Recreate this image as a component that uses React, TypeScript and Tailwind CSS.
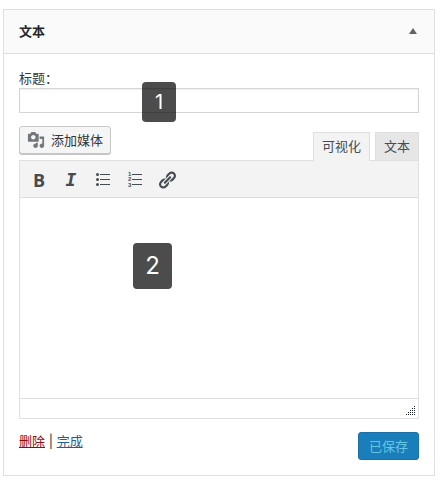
import React, { useState } from 'react';

const MediaIcon: React.FC = () => (
    <svg viewBox="0 0 20 20" className="h-[18px] w-[18px] shrink-0 fill-[#72777c]" aria-hidden="true">
        <path d="M13 11V4c0-.55-.45-1-1-1h-1.67L9 1H5L3.67 3H2c-.55 0-1 .45-1 1v7c0 .55.45 1 1 1h10c.55 0 1-.45 1-1zM7 4.5c1.38 0 2.5 1.12 2.5 2.5S8.38 9.5 7 9.5 4.5 8.38 4.5 7 5.62 4.5 7 4.5zM14 6h5v10.5c0 1.38-1.12 2.5-2.5 2.5S14 17.88 14 16.5s1.12-2.5 2.5-2.5c.17 0 .34.02.5.05V9h-3V6zm-4 8.05V13h2v3.5c0 1.38-1.12 2.5-2.5 2.5S7 17.88 7 16.5 8.12 14 9.5 14c.17 0 .34.02.5.05z" />
    </svg>
);

const BulletListIcon: React.FC = () => (
    <svg viewBox="0 0 20 20" className="h-5 w-5 fill-[#444b52]" aria-hidden="true">
        <circle cx="4.5" cy="4.5" r="1.5" />
        <circle cx="4.5" cy="9.5" r="1.5" />
        <circle cx="4.5" cy="14.5" r="1.5" />
        <path d="M7 4h10v1H7zM7 9h10v1H7zM7 14h10v1H7z" />
    </svg>
);

const NumberListIcon: React.FC = () => (
    <svg viewBox="0 0 20 20" className="h-5 w-5 fill-[#444b52] font-['Liberation_Sans',sans-serif] text-[6px] font-bold" aria-hidden="true">
        <text x="3" y="6">1</text>
        <text x="3" y="11">2</text>
        <text x="3" y="17">3</text>
        <path d="M7 4h10v1H7zM7 9h10v1H7zM7 14h10v1H7z" />
    </svg>
);

const LinkIcon: React.FC = () => (
    <svg viewBox="0 0 20 20" className="h-5 w-5 fill-[#444b52]" aria-hidden="true">
        <path d="M17.74 2.76c1.68 1.69 1.68 4.41 0 6.1l-1.53 1.52c-1.12 1.12-2.7 1.47-4.14 1.09l2.62-2.61.76-.77.76-.76c.84-.84.84-2.2 0-3.04-.84-.85-2.2-.85-3.04 0l-.77.76-3.38 3.38c-.37-1.44-.02-3.02 1.1-4.14l1.52-1.53c1.69-1.68 4.42-1.68 6.1 0zM8.59 13.43l5.34-5.34c.42-.42.42-1.1 0-1.52-.44-.43-1.13-.39-1.53 0l-5.33 5.34c-.42.42-.42 1.1 0 1.52.44.43 1.13.39 1.52 0zm-.76 2.29l4.14-4.15c.38 1.44.03 3.02-1.09 4.14l-1.52 1.53c-1.69 1.68-4.41 1.68-6.1 0-1.68-1.68-1.68-4.42 0-6.1l1.53-1.52c1.12-1.12 2.7-1.47 4.14-1.1l-4.14 4.15c-.85.84-.85 2.2 0 3.05.84.84 2.2.84 3.04 0z" />
    </svg>
);

const ResizeGrip: React.FC = () => (
    <svg viewBox="0 0 10 10" className="h-[10px] w-[10px] fill-[#23282d]" shapeRendering="crispEdges" aria-hidden="true">
        <path d="M8 0h1v1H8zM6 2h1v1H6zM8 2h1v1H8zM4 4h1v1H4zM6 4h1v1H6zM8 4h1v1H8zM2 6h1v1H2zM4 6h1v1H4zM6 6h1v1H6zM8 6h1v1H8zM0 8h1v1H0zM2 8h1v1H2zM4 8h1v1H4zM6 8h1v1H6zM8 8h1v1H8z" />
    </svg>
);

const App: React.FC = () => {
    const [title, setTitle] = useState('');
    const [content, setContent] = useState('');

    return (
        <div className="min-h-screen bg-white pt-[9px] pr-[5px] pb-2 pl-[3px] font-['Inter','Noto_Sans_CJK_SC',sans-serif] text-[13px] leading-5 text-[#32373c]">
            <section className="border border-[#dfdfdf] bg-white">
                <header className="flex h-11 items-center justify-between border-b border-[#dfdfdf] bg-[#fafafa] px-[15px] pb-[2px]">
                    <h3 className="font-bold text-[#23282d]">文本</h3>
                    <button type="button" aria-label="收起" className="flex h-5 w-3 items-center justify-center">
                        <svg viewBox="0 0 8 6" className="h-[6px] w-2 fill-[#606468]" aria-hidden="true">
                            <path d="M4 0l4 6H0z" />
                        </svg>
                    </button>
                </header>

                <div className="px-[15px] pt-[14px] pb-[15px]">
                    <label htmlFor="widget-title" className="block">标题：</label>
                    <div className="relative">
                        <input
                            id="widget-title"
                            type="text"
                            value={title}
                            onChange={(e) => setTitle(e.target.value)}
                            className="block h-[25px] w-full border border-[#d5d5d5] bg-white px-1 shadow-[inset_0_1px_2px_rgba(0,0,0,0.07)] outline-none"
                        />
                        <span className="pointer-events-none absolute -top-[6px] left-[123px] flex h-10 w-[34px] items-center justify-center rounded bg-black/70 text-xl text-white">
                            1
                        </span>
                    </div>

                    {/* Media button and editor mode tabs */}
                    <div className="mt-[13px] flex h-[34px] justify-between">
                        <button
                            type="button"
                            className="flex h-[28px] items-center gap-[6px] rounded-[3px] border border-[#c8c8c8] bg-[#f5f5f5] px-[7px] shadow-[0_1px_0_#c4c4c4]"
                        >
                            <MediaIcon />
                            添加媒体
                        </button>
                        <div className="flex gap-[5px] self-end" role="tablist">
                            <button
                                type="button"
                                role="tab"
                                aria-selected="true"
                                className="relative -mb-px h-[29px] border border-b-0 border-[#dfdfdf] bg-[#f3f3f3] px-2 pb-[2px] text-[#444b52]"
                            >
                                可视化
                            </button>
                            <button
                                type="button"
                                role="tab"
                                aria-selected="false"
                                className="h-7 border border-b-0 border-[#dfdfdf] bg-[#e6e6e6] px-2 pb-px text-[#444b52]"
                            >
                                文本
                            </button>
                        </div>
                    </div>

                    {/* Editor */}
                    <div className="border border-[#dfdfdf]">
                        <div className="flex h-[37px] items-center gap-3 border-b border-[#dfdfdf] bg-[#f3f3f3] px-[9px] pt-[2px] text-[#444b52]" role="toolbar">
                            <button type="button" aria-label="粗体" className="flex h-5 w-5 items-center justify-center font-['Open_Sans',sans-serif] text-lg leading-5 font-bold">
                                B
                            </button>
                            <button
                                type="button"
                                aria-label="斜体"
                                className="flex h-5 w-5 items-center justify-center font-['DejaVu_Sans_Mono',monospace] text-lg leading-5 font-bold italic"
                            >
                                I
                            </button>
                            <button type="button" aria-label="项目符号列表"><BulletListIcon /></button>
                            <button type="button" aria-label="编号列表"><NumberListIcon /></button>
                            <button type="button" aria-label="插入链接"><LinkIcon /></button>
                        </div>
                        <div className="relative">
                            <textarea
                                aria-label="内容"
                                value={content}
                                onChange={(e) => setContent(e.target.value)}
                                className="block h-[200px] w-full resize-none bg-white p-2 outline-none"
                            />
                            <span className="pointer-events-none absolute top-[45px] left-[113px] flex h-[46px] w-[39px] items-center justify-center rounded bg-black/70 text-2xl text-white">
                                2
                            </span>
                        </div>
                        <div className="flex h-5 items-end justify-end border-t border-[#dfdfdf] px-[2px] pb-[2px]">
                            <ResizeGrip />
                        </div>
                    </div>

                    <div className="mt-[13px] flex items-start justify-between">
                        <div className="leading-[18px]">
                            <a href="#delete" className="text-[#8f0a12] underline">删除</a>
                            {' | '}
                            <a href="#done" className="text-[#1f5f91] underline">完成</a>
                        </div>
                        <button
                            type="button"
                            disabled
                            className="h-7 rounded-[3px] border border-[#1b6fa5] bg-[#1a7ebb] px-[10px] text-[#66c6e4]"
                        >
                            已保存
                        </button>
                    </div>
                </div>
            </section>
        </div>
    );
};

export default App;
